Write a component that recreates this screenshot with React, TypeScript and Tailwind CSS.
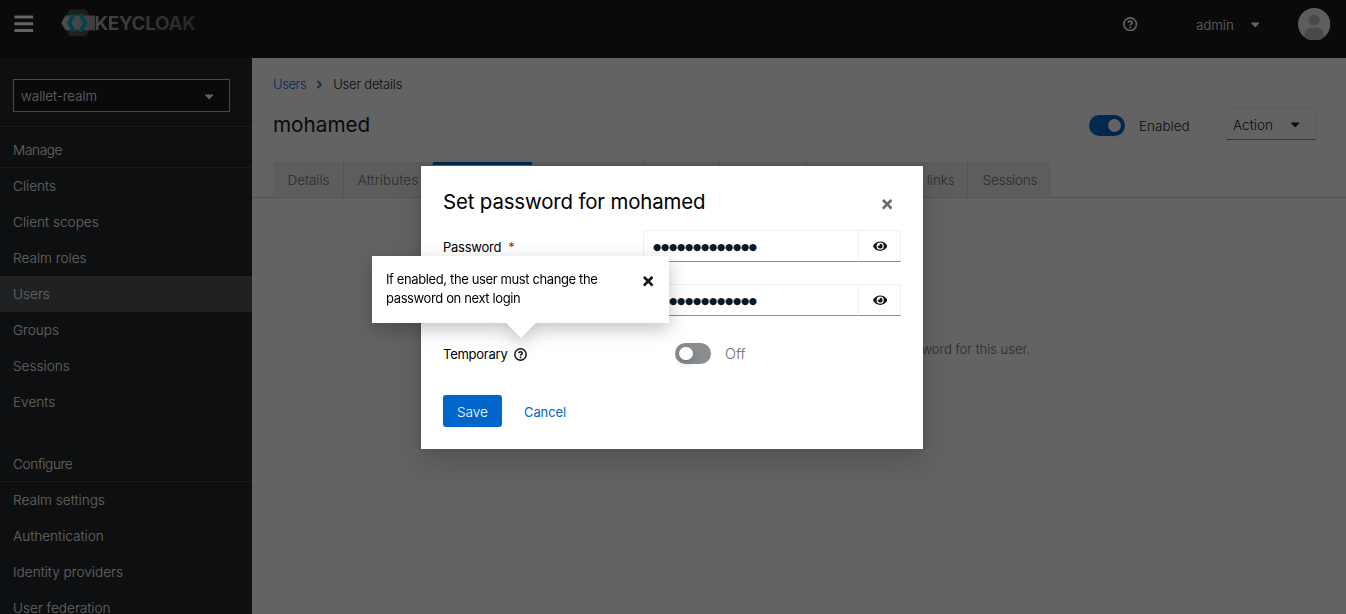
import type { ReactNode } from "react";
import { FaAngleRight, FaBars, FaCaretDown, FaEye, FaTimes } from "react-icons/fa";

const manageItems = ["Clients", "Client scopes", "Realm roles", "Users", "Groups", "Sessions", "Events"];
const configureItems = ["Realm settings", "Authentication", "Identity providers", "User federation"];

function HelpIcon({ className }: { className: string }) {
  return (
    <svg viewBox="0 0 16 16" className={className} fill="none" stroke="currentColor">
      <circle cx="8" cy="8" r="7" strokeWidth="1.8" />
      <path d="M5.800 6.500C5.900 5.200 6.800 4.600 8 4.600c1.300 0 2.200.7 2.200 1.800 0 1.400-2.100 1.500-2.100 3.100" strokeWidth="1.900" />
      <circle cx="8.100" cy="11.600" r="1.100" fill="currentColor" stroke="none" />
    </svg>
  );
}

function Logo() {
  return (
    <div className="flex h-7 items-center">
      <svg viewBox="0 0 34 28" className="h-7 w-[34px]">
        <defs>
          <linearGradient id="band">
            <stop offset="0" stopColor="#c4c4c4" />
            <stop offset="1" stopColor="#9a9a9a" />
          </linearGradient>
        </defs>
        <path d="M8.500 .3h16.500l7 13.500-7 13.500H8.500L2.500 13.800z" fill="#4d4d4d" />
        <path d="M4.500 6.600H34v14.600H4.500L.3 13.900z" fill="url(#band)" />
        <path d="M10.800 4.700L15 5.200 10.300 13.900l4.700 8.700-4.200.5L6 13.900z" fill="#00a3c8" />
        <path d="M17 5.200l4.200-.5L26.600 13.900l-5.400 9.200-4.200-.5L21.900 13.900z" fill="#00a3c8" />
      </svg>
      <span className="bg-gradient-to-r from-[#b0b0b0] to-[#606060] bg-clip-text pt-px text-[19px] leading-7 font-bold tracking-[-0.420px] text-transparent">
        KEYCLOAK
      </span>
    </div>
  );
}

function Switch({ on }: { on?: boolean }) {
  return (
    <span className={`flex h-[21px] w-9 items-center rounded-full px-1 ${on ? "justify-end bg-[#0066cc]" : "justify-start bg-[#8a8d90]"}`}>
      <span className="size-[13.500px] rounded-full bg-white shadow-[0_3px_7px_1px_rgba(3,3,3,0.14)]" />
    </span>
  );
}

function NavSection({ title, items, className }: { title: string; items: string[]; className: string }) {
  return (
    <section className={className}>
      <h2 className="flex h-9 items-center border-b border-[#3c3f42] pt-px pl-[13px] tracking-[-0.350px]">{title}</h2>
      <ul>
        {items.map((item) => (
          <li key={item} className={`flex h-9 items-center pl-[13px] ${item === "Users" ? "bg-[#4f5255]" : ""}`}>
            {item}
          </li>
        ))}
      </ul>
    </section>
  );
}

function Tab({ children, className }: { children: ReactNode; className: string }) {
  return (
    <div className={`flex shrink-0 items-center justify-center border-[#d2d2d2] pt-px whitespace-nowrap ${className}`}>{children}</div>
  );
}

function PasswordField({ label, id }: { label: string; id: string }) {
  return (
    <div className="flex h-8 items-center">
      <div id={id} className="w-[200px] pt-[2px] text-[13px] tracking-[-0.250px] whitespace-nowrap">
        {label}
        <span className="ml-[7px] text-[#c9190b]">*</span>
      </div>
      <div className="flex h-8 w-[215px] items-center border border-r-0 border-[#f0f0f0] border-b-[#8a8d90] pt-[2px] pl-[9px] font-['DejaVu_Sans',sans-serif] text-[9.500px] tracking-[-0.300px] text-[#151515]">
        ●●●●●●●●●●●●●
      </div>
      <button aria-labelledby={id} className="flex h-8 w-[43px] items-center justify-center border border-[#f0f0f0] border-b-[#8a8d90] pl-px text-[#151515]">
        <FaEye className="size-[14.400px]" />
      </button>
    </div>
  );
}

export default function App() {
  return (
    <div className="relative flex h-[614px] w-[1346px] flex-col overflow-hidden bg-white font-['Inter',sans-serif] text-[13.600px] leading-5 font-light text-[#151515]">
      <header className="flex h-[58px] shrink-0 items-start bg-[#151515] text-white">
        <FaBars className="mt-[13px] ml-[13px] size-[21.600px]" />
        <div className="mt-[9px] ml-[26px]">
          <Logo />
        </div>
        <HelpIcon className="mt-[17px] ml-auto size-[14.400px]" />
        <span className="mt-[15px] ml-[58px] text-[13.300px]">admin</span>
        <FaCaretDown className="mt-[17px] ml-[14px] size-[14.400px]" />
        <svg viewBox="0 0 36 36" className="mt-2 mr-[15.500px] ml-9 size-[32.400px]">
          <clipPath id="avatar">
            <circle cx="18" cy="18" r="18" />
          </clipPath>
          <g clipPath="url(#avatar)">
            <path d="M0 0h36v36H0z" fill="#f0f0f0" />
            <circle cx="18" cy="13.500" r="6.200" fill="#b8bbbe" />
            <path d="M7 36v-6a8 8 0 0 1 8-8h6a8 8 0 0 1 8 8v6z" fill="#b8bbbe" />
          </g>
        </svg>
      </header>

      <div className="flex min-h-0 grow">
        <nav className="w-[252px] shrink-0 overflow-hidden bg-[#212427] text-white">
          <div className="flex h-[69px] items-start border-b border-[#3c3f42] px-[13px] pt-[21px]">
            <div className="flex h-[33px] w-[217px] items-center justify-between border border-[#b8bbbe] bg-[#151515] pt-px pr-[13px] pl-[7px] text-[13.300px]">
              wallet-realm
              <FaCaretDown className="size-[14.400px]" />
            </div>
          </div>
          <NavSection title="Manage" items={manageItems} className="pt-[5px]" />
          <NavSection title="Configure" items={configureItems} className="pt-[26px]" />
        </nav>

        <main className="flex min-w-0 grow flex-col">
          <div className="flex h-9 items-center pt-[16px] pl-[21px] text-[13px] leading-[18px] tracking-[-0.200px]">
            <span className="tracking-[-0.400px] text-[#0066cc]">Users</span>
            <FaAngleRight className="mx-[7px] size-[13px] text-[#6a6e73]" />
            <span>User details</span>
          </div>
          <div className="flex h-[68px] items-start pt-[14px] pr-[30px] pl-[21px]">
            <h1 className="mt-1 text-[20.700px] leading-[26px] font-normal">mohamed</h1>
            <div className="mt-[7px] ml-auto">
              <Switch on />
            </div>
            <span className="mt-2 ml-[14px] w-[87px] text-[13.500px]">Enabled</span>
            <div className="flex h-8 w-[90px] items-center justify-between border border-[#f0f0f0] border-b-[#8a8d90] pr-[13px] pl-[6px]">
              <span className="pt-px">Action</span>
              <FaCaretDown className="size-[14.400px]" />
            </div>
          </div>
          <div className="flex h-9 border-b border-[#d2d2d2] pl-[21px] text-[13.400px] text-[#6a6e73]">
            <Tab className="w-[71px] border-r bg-[#f0f0f0] pl-px">Details</Tab>
            <Tab className="w-[89px] border-r bg-[#f0f0f0] tracking-[0.150px]">Attributes</Tab>
            <Tab className="w-[99px] border-t-[3px] border-t-[#0066cc] bg-white text-[#151515]">Credentials</Tab>
            <Tab className="w-[113px] border-r bg-[#f0f0f0]">Role mapping</Tab>
            <Tab className="w-[75px] border-r bg-[#f0f0f0]">Groups</Tab>
            <Tab className="w-[87px] border-r bg-[#f0f0f0]">Consents</Tab>
            <Tab className="w-[161px] border-r bg-[#f0f0f0] pl-1 tracking-[-0.100px]">Identity provider links</Tab>
            <Tab className="w-[83px] bg-[#f0f0f0] pl-px tracking-[-0.200px]">Sessions</Tab>
          </div>
          <p className="self-end pt-[141px] pr-[316px] text-right text-[13px] whitespace-nowrap text-[#6a6e73]">
            This user does not have any credentials. You can set password for this user.
          </p>
        </main>
      </div>

      <div className="absolute inset-0 flex items-center justify-center bg-[#030303]/62 pt-px pr-[2px]">
        <div role="dialog" className="relative h-[283px] w-[502px] bg-white px-[22px] font-normal text-black shadow-[0_14px_29px_0_rgba(3,3,3,0.16),0_0_7px_0_rgba(3,3,3,0.1)]">
          <div className="flex h-16 items-start justify-between pt-[22px] pr-[7px]">
            <h2 className="text-[20.400px] leading-7 tracking-[-0.130px] text-[#000]">Set password for mohamed</h2>
            <FaTimes className="mt-[9px] size-[14.400px] text-[#6a6e73]" />
          </div>
          <div className="flex flex-col gap-[22px]">
            <PasswordField id="password" label="Password" />
            <PasswordField id="confirmation" label="Password confirmation" />
            <div className="flex h-[31px] items-center">
              <div className="flex w-[232px] items-center pt-px text-[13px] tracking-[-0.250px]">
                Temporary
                <HelpIcon className="ml-[7px] size-[13px] text-[#151515]" />
              </div>
              <Switch />
              <span className="ml-[14px] pt-px text-[14.400px] font-light text-[#6a6e73]">Off</span>
            </div>
          </div>
          <div className="mt-[26px] flex h-8 items-center font-light">
            <button className="h-8 w-[59px] rounded-[3px] bg-[#0066cc] pt-[2px] text-white">Save</button>
            <button className="ml-[22px] pt-[2px] text-[13px] font-normal tracking-[-0.100px] text-[#0066cc]">Cancel</button>
          </div>

          <div role="tooltip" className="absolute top-[90px] left-[-49px] flex h-[67px] w-[297px] justify-between bg-white pt-[14px] pr-[14px] pl-[14px] text-[13px] leading-[19px] tracking-[-0.380px] drop-shadow-[0_6px_9px_rgba(3,3,3,0.24)]">
            <p className="w-[230px]">
              If enabled, the user must change the
              <br />
              password on next login
            </p>
            <FaTimes className="mt-1 size-[14.400px] text-[#151515]" />
            <svg viewBox="0 0 32 16" className="absolute top-[66px] left-[133px] h-4 w-8">
              <path d="M0 0h32L16 16z" fill="#fff" />
            </svg>
          </div>
        </div>
      </div>
    </div>
  );
}
